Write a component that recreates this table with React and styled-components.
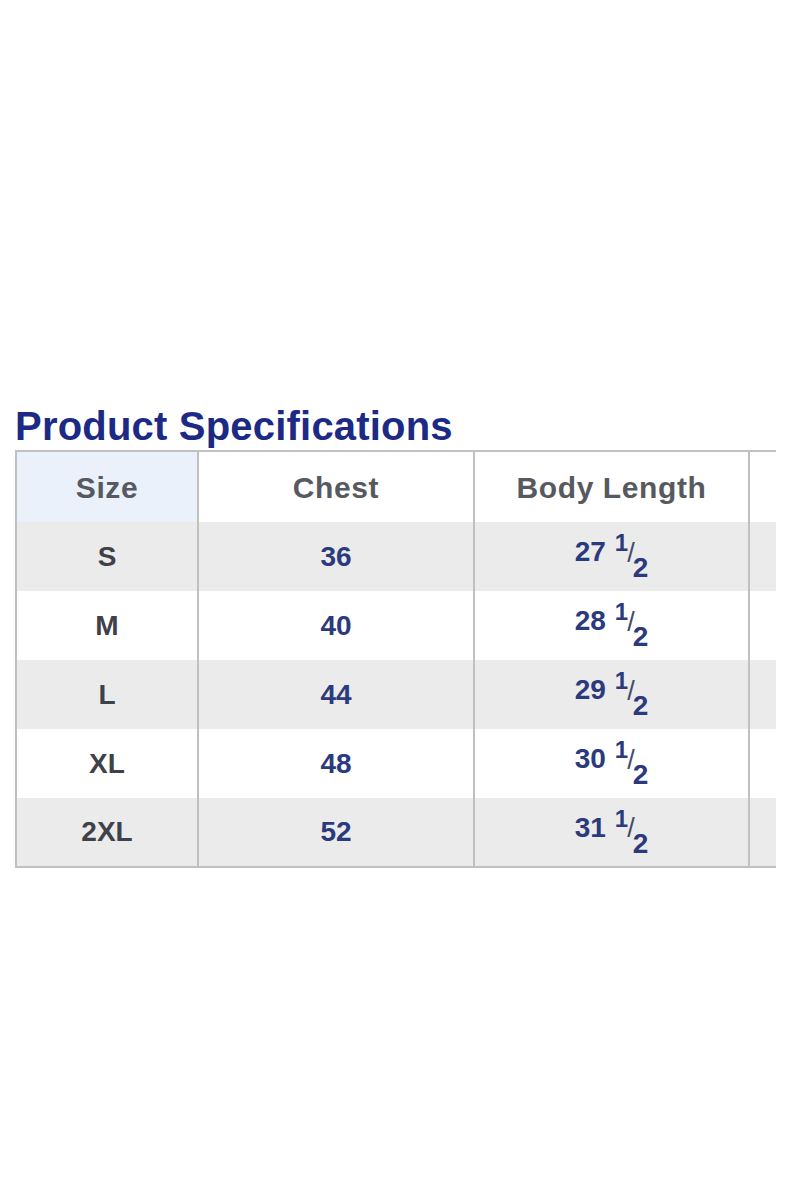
import React from "react";
import styled, { createGlobalStyle } from "styled-components";

const Global = createGlobalStyle`
  html, body {
    margin: 0;
    padding: 0;
    background: #ffffff;
  }
  body {
    font-family: "Liberation Sans", Arial, sans-serif;
  }
`;

const Page = styled.div`
  width: 800px;
  height: 1200px;
  padding: 406px 0 0 15px;
  box-sizing: border-box;
`;

const Title = styled.h2`
  margin: 0 0 3px 0;
  font-size: 40px;
  line-height: 41px;
  font-weight: bold;
  letter-spacing: 0.2px;
  color: #1c2985;
`;

const Table = styled.table`
  width: 760px;
  border-collapse: collapse;
  table-layout: fixed;
  border-top: 2px solid #c0c0c0;
  border-bottom: 2px solid #c0c0c0;
`;

const Row = styled.tr`
  height: ${p => (p.$head ? 71 : 69)}px;
  background: ${p => (p.$shade ? "#ebebeb" : "#ffffff")};
`;

const Cell = styled.td`
  padding: 0;
  text-align: center;
  vertical-align: middle;
  border-left: 2px solid #c0c0c0;
  font-size: 28px;
  font-weight: bold;
  color: ${p => p.$color || "#2b3a7c"};
  background: ${p => p.$bg || "transparent"};
`;

const HeadCell = styled(Cell).attrs({ as: "th" })`
  color: #565a60;
  font-size: 30px;
  letter-spacing: 0.6px;
  padding-top: 2px;
`;

const Whole = styled.span`
  position: relative;
  top: -2px;
`;

const Frac = styled.span`
  display: inline-block;
  margin-left: 9px;
  font-size: 24px;
  white-space: nowrap;
`;

const Num = styled.span`
  display: inline-block;
  vertical-align: 0.5em;
`;

const Slash = styled.span`
  display: inline-block;
  margin: 0 -2px 0 -1px;
  font-size: 27px;
  font-weight: normal;
  color: #444b6a;
  vertical-align: 0.05em;
`;

const Den = styled.span`
  display: inline-block;
  font-size: 28px;
  vertical-align: -0.5em;
`;

const rows = [
  ["S", "36", "27"],
  ["M", "40", "28"],
  ["L", "44", "29"],
  ["XL", "48", "30"],
  ["2XL", "52", "31"],
];

export default function App() {
  return (
    <Page>
      <Global />
      <Title>Product Specifications</Title>
      <Table>
        <colgroup>
          <col style={{ width: 182 }} />
          <col style={{ width: 276 }} />
          <col style={{ width: 275 }} />
          <col style={{ width: 27 }} />
        </colgroup>
        <thead>
          <Row $head>
            <HeadCell $bg="#eaf1fb">Size</HeadCell>
            <HeadCell>Chest</HeadCell>
            <HeadCell>Body Length</HeadCell>
            <HeadCell />
          </Row>
        </thead>
        <tbody>
          {rows.map(([size, chest, len], i) => (
            <Row key={size} $shade={i % 2 === 0}>
              <Cell $color="#3f4149">{size}</Cell>
              <Cell>{chest}</Cell>
              <Cell>
                <Whole>{len}</Whole>
                <Frac>
                  <Num>1</Num>
                  <Slash>/</Slash>
                  <Den>2</Den>
                </Frac>
              </Cell>
              <Cell />
            </Row>
          ))}
        </tbody>
      </Table>
    </Page>
  );
}
